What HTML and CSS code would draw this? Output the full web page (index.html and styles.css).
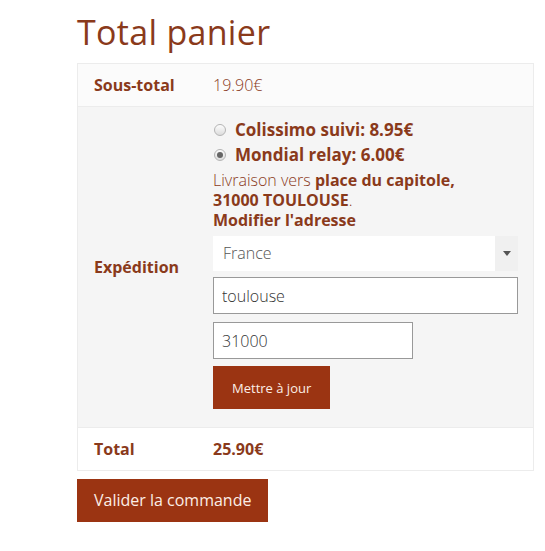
FILE: index.html
```html
<!DOCTYPE html>
<html lang="fr">
<head>
    <meta charset="UTF-8">
    <title>Total panier</title>
    <link rel="stylesheet" href="styles.css">
</head>
<body>
    <div class="cart-totals">
        <h2>Total panier</h2>
        <table class="totals">
            <tr class="subtotal">
                <th>Sous-total</th>
                <td class="amount">19.90€</td>
            </tr>
            <tr class="shipping">
                <th>Expédition</th>
                <td>
                    <ul class="methods">
                        <li><input type="radio" name="ship" id="colissimo"><label for="colissimo">Colissimo suivi: 8.95€</label></li>
                        <li><input type="radio" name="ship" id="mondial" checked><label for="mondial">Mondial relay: 6.00€</label></li>
                    </ul>
                    <p class="destination">Livraison vers <strong>place du capitole, <span class="nowrap">31000 TOULOUSE</span></strong>.<br><a href="#">Modifier l'adresse</a></p>
                    <form class="calc">
                        <div class="select">
                            <span class="value">France</span>
                            <span class="arrow"></span>
                        </div>
                        <input type="text" class="city" value="toulouse">
                        <input type="text" class="zip" value="31000">
                        <button type="button" class="update">Mettre à jour</button>
                    </form>
                </td>
            </tr>
            <tr class="order-total">
                <th>Total</th>
                <td><strong>25.90€</strong></td>
            </tr>
        </table>
        <a class="checkout" href="#">Valider la commande</a>
    </div>
</body>
</html>
```

FILE: styles.css
```css
body {
    margin: 0;
    font-family: "Open Sans", sans-serif;
    color: #8a3a1b;
    background: #fff;
}
.cart-totals {
    padding: 11px 0 0 77px;
    width: 457px;
}
h2 {
    margin: 0 0 10px;
    font-size: 34px;
    font-weight: 400;
    line-height: 42px;
    color: #8a3a1b;
    letter-spacing: 0.3px;
}
.totals {
    width: 100%;
    border-collapse: collapse;
    border: 1px solid #ececec;
}
.totals th {
    text-align: left;
    width: 104px;
    padding: 0 16px;
    font-size: 16px;
    font-weight: 700;
}
.totals td {
    font-size: 16px;
    padding: 0;
}
.subtotal, .order-total {
    height: 43px;
}
.subtotal {
    background: #fbfbfb;
    border-bottom: 1px solid #ececec;
}
.amount {
    font-weight: 300;
}
.shipping {
    background: #f5f5f5;
}
.shipping td {
    padding: 10px 15px 18px 0;
}
.methods {
    list-style: none;
    margin: 0;
    padding: 0;
}
.methods li {
    display: flex;
    align-items: center;
    height: 25px;
    font-size: 17px;
    font-weight: 700;
}
.methods input {
    appearance: none;
    -webkit-appearance: none;
    box-sizing: border-box;
    margin: 0 9px 0 1px;
    width: 12px;
    height: 12px;
    border-radius: 50%;
    border: 1px solid #b5b5b5;
    background: linear-gradient(#fdfdfd, #dcdcdc);
    position: relative;
}
.methods input:checked::after {
    content: "";
    position: absolute;
    left: 2px;
    top: 2px;
    width: 6px;
    height: 6px;
    border-radius: 50%;
    background: #666;
}
.destination {
    margin: 3px 0 6px;
    font-size: 16px;
    line-height: 20px;
    font-weight: 300;
}
.destination strong, .destination a {
    font-weight: 700;
    color: #8a3a1b;
    text-decoration: none;
}
.nowrap {
    white-space: nowrap;
}
.calc {
    display: flex;
    flex-direction: column;
    align-items: flex-start;
}
.select {
    display: flex;
    width: 305px;
    height: 35px;
}
.select .value {
    flex: 1;
    background: #fff;
    padding: 0 10px;
    line-height: 35px;
    font-weight: 300;
    color: #555;
}
.select .arrow {
    width: 23px;
    background: #f0f0f0;
    position: relative;
}
.select .arrow::after {
    content: "";
    position: absolute;
    left: 8px;
    top: 15px;
    border-left: 4px solid transparent;
    border-right: 4px solid transparent;
    border-top: 5px solid #555;
}
.calc input {
    box-sizing: border-box;
    height: 37px;
    padding: 0 8px;
    border: 1px solid #999;
    font-family: inherit;
    font-size: 16px;
    font-weight: 300;
    color: #333;
}
.city {
    width: 305px;
    margin-top: 6px;
}
.zip {
    width: 200px;
    margin-top: 8px;
}
.update {
    margin-top: 7px;
    height: 43px;
    padding: 0 19px;
    background: #9b3412;
    color: #fbeee6;
    border: none;
    font-family: inherit;
    font-size: 13px;
}
.order-total {
    border-top: 1px solid #ececec;
}
.order-total strong {
    font-size: 16px;
}
.checkout {
    display: inline-block;
    margin-top: 8px;
    height: 43px;
    line-height: 43px;
    padding: 0 17px;
    background: #9b3412;
    color: #fbeee6;
    text-decoration: none;
    font-size: 16px;
}
```
